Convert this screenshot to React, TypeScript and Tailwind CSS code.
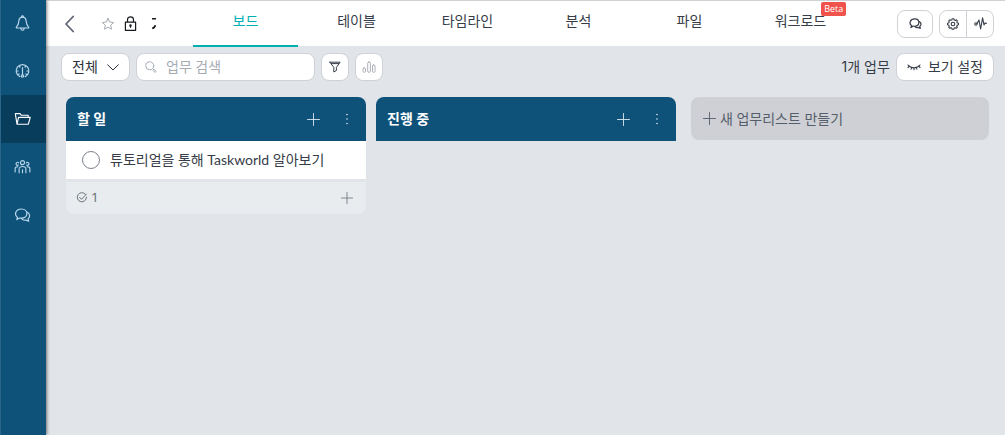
import type { ReactNode } from "react";

type IconProps = { className?: string };

function Svg({ className, box = "0 0 16 16", width = 1, children }: { className?: string; box?: string; width?: number; children: ReactNode }) {
  return (
    <svg viewBox={box} className={className} fill="none" stroke="currentColor" strokeWidth={width} strokeLinecap="round" strokeLinejoin="round" aria-hidden="true">
      {children}
    </svg>
  );
}

const Bell = ({ className }: IconProps) => (
  <Svg className={className} width={1.2}>
    <path d="M8 2.2C5.7 2.2 4.5 4 4.3 6.2C4.1 9 3.5 10.6 1.9 12.1C1.6 12.6 1.8 13 2.3 13H13.7C14.2 13 14.4 12.6 14.1 12.1C12.5 10.6 11.9 9 11.7 6.2C11.5 4 10.3 2.2 8 2.2Z" />
    <path d="M7.2 2.2V1.2C7.2.6 8.8.6 8.8 1.2V2.2M6.4 13.2C6.4 15.9 9.6 15.9 9.6 13.2" />
  </Svg>
);

const Gauge = ({ className }: IconProps) => (
  <Svg className={className} width={1.2}>
    <path d="M5.3 13.6A6.3 6.3 0 1 1 10.7 13.6" />
    <path d="M8 4.6V11.6M5.3 2.5V4.2M10.7 2.5V4.2M1.8 8H3.6M12.4 8H14.2M3.6 11.6L4.6 11M12.4 11.6L11.4 11" />
    <circle cx="8" cy="13" r="1.2" />
  </Svg>
);

const Folder = ({ className }: IconProps) => (
  <Svg className={className} box="0 0 18 16" width={1.2}>
    <path d="M3.2 13.5L1.5 3.2V2.3H6.3L7.7 4H15V6.2M3.2 13.5L4.8 6.3H17.2L15.2 13.5H3.2Z" />
  </Svg>
);

const People = ({ className }: IconProps) => (
  <Svg className={className} box="0 0 18 16" width={1.2}>
    <circle cx="9" cy="3.4" r="2.1" />
    <path d="M4.6 6A1.6 1.6 0 1 1 5 3.6M13.4 6A1.6 1.6 0 1 0 13 3.6" />
    <path d="M5.4 14.2V10.2C5.4 6.6 12.6 6.6 12.6 10.2V14.2M9 11V14.2M1.2 13.2V9.8C1.2 8.4 2.2 7.6 3.9 7.8M16.8 13.2V9.8C16.8 8.4 15.8 7.6 14.1 7.8" />
  </Svg>
);

const Chat = ({ className }: IconProps) => (
  <Svg className={className} width={1.2}>
    <path d="M2.3 12.6L3 10.4C-.8 7.4 1.4 2 6.9 2C14.2 2 14.2 11.2 6.9 11.2C6.2 11.2 5.7 11.1 5.1 11L2.3 12.6Z" />
    <path d="M13 5.3C15.8 7.2 15.6 10.1 13.6 11.7L14.2 14.2L11.4 13.1C9.6 13.5 8 12.9 7.1 11.7" />
  </Svg>
);

const ChatBold = ({ className }: IconProps) => (
  <Svg className={className} width={1.5}>
    <path d="M2.4 13L3.2 10.7C-.6 7.7 1.6 2.4 7.1 2.4C13.8 2.4 13.8 11.4 7.1 11.4C6.4 11.4 5.8 11.3 5.2 11.1L2.4 13Z" />
    <path d="M13 5.8C15.4 7.5 15.2 10.1 13.3 11.5L13.9 14L11.4 12.9C9.6 13.3 8.3 12.8 7.5 12" />
  </Svg>
);

const Star = ({ className }: IconProps) => (
  <Svg className={className} width={1.1}>
    <path d="M8 1.5L9.9 5.7L14.5 6.2L11.1 9.3L12 13.9L8 11.6L4 13.9L4.9 9.3L1.5 6.2L6.1 5.7Z" />
  </Svg>
);

const Lock = ({ className }: IconProps) => (
  <Svg className={className} box="0 0 14 18" width={1.3}>
    <path d="M1.5 7.6H12.5V16.3H1.5ZM3.8 7.5V4.8C3.8.8 10.2.8 10.2 4.8V7.5M7 11.3V13" />
    <circle cx="7" cy="11.2" r=".7" fill="currentColor" />
  </Svg>
);

const Plus = ({ className }: IconProps) => (
  <Svg className={className} box="0 0 13 13" width={0.9}>
    <path d="M6.5 .5V12.5M.5 6.5H12.5" />
  </Svg>
);

const Search = ({ className }: IconProps) => (
  <Svg className={className} box="0 0 12 12">
    <circle cx="4.8" cy="4.8" r="4" />
    <path d="M7.8 7.8L8.9 8.9M8.5 9.2L9.2 8.5L11.2 10.4L10.4 11.2Z" />
  </Svg>
);

const Funnel = ({ className }: IconProps) => (
  <Svg className={className} box="0 0 12 12">
    <path d="M.9 1.2H11.1L7.4 6.4V9.5L4.8 11V6.4L.9 1.2ZM2.3 2.6H9.7" />
  </Svg>
);

const Bars = ({ className }: IconProps) => (
  <Svg className={className} box="0 0 14 12">
    <rect x="1" y="7" width="2.5" height="4.3" rx="1" />
    <rect x="5.7" y="1" width="2.7" height="10.3" rx="1.2" />
    <rect x="10.5" y="4" width="2.5" height="7.3" rx="1" />
  </Svg>
);

const Gear = ({ className }: IconProps) => (
  <Svg className={className} box="0 0 12 12" width={1.1}>
    <circle cx="6" cy="6" r="1.8" />
    <path d="M5.2 .7H6.8L7.2 2L8.2 2.4L9.4 1.8L10.4 2.8L9.8 3.9L10.1 4.8L11.4 5.2V6.8L10.1 7.2L9.7 8.2L10.3 9.3L9.2 10.3L8.1 9.7L7.2 10.1L6.8 11.3H5.2L4.8 10.1L3.8 9.7L2.7 10.3L1.7 9.2L2.2 8.1L1.9 7.2L.6 6.8V5.2L1.9 4.8L2.2 3.9L1.7 2.8L2.8 1.8L3.9 2.3L4.8 2Z" />
  </Svg>
);

const Pulse = ({ className }: IconProps) => (
  <Svg className={className} box="0 0 13 13" width={1.1}>
    <circle cx="1.9" cy="7" r="1.2" />
    <path d="M3.1 6.6L5 3L6.6 12L8.6 .8L10 8L11 6L12.4 6.4" />
  </Svg>
);

const ClosedEye = ({ className }: IconProps) => (
  <Svg className={className} box="0 0 14 7" width={1.1}>
    <path d="M1 1C3.8 4.6 10.2 4.6 13 1M2.2 2.3L1 3.5M4.6 3.6L4.1 5.2M7 4V5.7M9.4 3.6L9.9 5.2M11.8 2.3L13 3.5" />
  </Svg>
);

const Check = ({ className }: IconProps) => (
  <Svg className={className} box="0 0 12 12">
    <path d="M9.2 2A4.6 4.6 0 1 0 10.5 5.2" />
    <path d="M3.6 5.3L5.5 7.3L10.4 2.1" />
  </Svg>
);

const Dots = ({ className }: IconProps) => (
  <svg viewBox="0 0 4 12" className={className} fill="currentColor" aria-hidden="true">
    <circle cx="2" cy="1.5" r=".8" />
    <circle cx="2" cy="6" r=".8" />
    <circle cx="2" cy="10.5" r=".8" />
  </svg>
);

const sideItems = [
  { label: "알림", icon: Bell },
  { label: "대시보드", icon: Gauge },
  { label: "프로젝트", icon: Folder, active: true },
  { label: "사람", icon: People },
  { label: "채팅", icon: Chat },
];

const tabs = [
  { label: "보드", active: true },
  { label: "테이블" },
  { label: "타임라인" },
  { label: "분석" },
  { label: "파일" },
  { label: "워크로드", badge: "Beta" },
];

function Column({ title, children }: { title: string; children?: ReactNode }) {
  return (
    <section className="w-[300px] shrink-0">
      <header className="flex h-11 items-center rounded-t-lg bg-[#0e527a] pl-[11px] pr-[17px] text-white">
        <h2 className="flex-1 font-bold">{title}</h2>
        <button aria-label="업무 추가" className="mr-[25px] text-[#dbe7ef]"><Plus className="size-[13px]" /></button>
        <button aria-label="더 보기" className="text-[#dbe7ef]"><Dots className="h-3 w-1" /></button>
      </header>
      {children}
    </section>
  );
}

export default function App() {
  return (
    <div className="flex min-h-screen bg-[#e1e4e9] font-['Lato','Noto_Sans_CJK_KR',sans-serif] text-sm leading-5 text-[#363c48]">
      <aside className="z-10 w-[46px] shrink-0 border-l border-[#2b658a] bg-[#0e527a] text-[#b9d8eb] shadow-[1px_0_3px_rgba(0,0,0,0.5)]">
        <nav className="-mt-px flex flex-col">
          {sideItems.map(({ label, icon: Icon, active }) => (
            <a key={label} href="#" aria-label={label} className={active ? "flex h-12 items-center justify-center bg-[#093d5c] pr-[2px] text-white" : "flex h-12 items-center justify-center pr-[2px]"}>
              <Icon className="h-4 w-[17px]" />
            </a>
          ))}
        </nav>
      </aside>

      <div className="min-w-0 flex-1">
        <header className="flex h-[46px] items-center border-t border-[#d0d1d3] bg-white pr-[11px]">
          <button aria-label="뒤로" className="ml-[18px] text-[#5d6571]">
            <Svg className="h-[18px] w-[11px]" box="0 0 11 18" width={1.8}><path d="M9.2 1.5L2 9L9.2 16.5" /></Svg>
          </button>
          <button aria-label="즐겨찾기" className="ml-[26px] text-[#a3a8b0]"><Star className="size-[14px]" /></button>
          <Lock className="ml-[9px] h-[17px] w-[13px] text-[#17191d]" />
          <Svg className="ml-[14px] h-3 w-[6px] text-[#17191d]" box="0 0 6 12" width={1.8}><path d="M1 .5H5M4.6 7.4L2.8 9.8L1.2 10.4" strokeLinecap="butt" /></Svg>
          <nav className="ml-9 flex h-[46px] items-stretch gap-[6px] self-start">
            {tabs.map((t) => (
              <a key={t.label} href="#" className={t.active ? "flex w-[105px] justify-center border-b-2 border-[#00b0b0] pt-[10px] text-[#00b0b0]" : "flex w-[105px] justify-center pt-[10px]"}>
                <span className="relative self-start">
                  {t.label}
                  {t.badge && <span className="absolute -right-5 -top-[9px] h-[14px] rounded-[2px] bg-[#f0524c] px-[3px] font-['Open_Sans',sans-serif] text-[9px] leading-[14px] text-white">{t.badge}</span>}
                </span>
              </a>
            ))}
          </nav>
          <div className="ml-auto flex gap-[6px]">
            <button aria-label="채팅" className="flex h-7 w-9 items-center justify-center rounded-lg border border-[#cfd1d6]"><ChatBold className="size-[13px]" /></button>
            <div className="flex h-7 rounded-lg border border-[#cfd1d6]">
              <button aria-label="설정" className="flex w-[27px] items-center justify-center border-r border-[#cfd1d6]"><Gear className="size-3" /></button>
              <button aria-label="활동" className="flex w-[26px] items-center justify-center"><Pulse className="size-[13px]" /></button>
            </div>
          </div>
        </header>

        <div className="flex items-center gap-[6px] pl-[15px] pr-[11px] pt-[7px]">
          <button className="flex h-7 w-[69px] items-center justify-between rounded-lg border border-[#cfd1d6] bg-white px-[10px] text-[#2b303a]">
            전체
            <Svg className="h-[7px] w-3" box="0 0 12 7"><path d="M.7 .8L6 6L11.3 .8" /></Svg>
          </button>
          <label className="flex h-7 w-[179px] items-center gap-[9px] rounded-lg border border-[#cfd1d6] bg-white px-2 text-[#a6abb4]">
            <Search className="size-3 shrink-0" />
            <input aria-label="업무 검색" placeholder="업무 검색" className="h-5 w-full min-w-0 bg-transparent outline-none placeholder:text-[#a6abb4]" />
          </label>
          <button aria-label="필터" className="flex size-7 items-center justify-center rounded-lg border border-[#cfd1d6] bg-white"><Funnel className="size-3" /></button>
          <button aria-label="통계" className="flex size-7 items-center justify-center rounded-lg border border-[#cfd1d6] bg-white text-[#aeb1b8]"><Bars className="h-3 w-[14px]" /></button>
          <span className="ml-auto font-['Inter','Noto_Sans_CJK_KR',sans-serif]">1개 업무</span>
          <button className="flex h-7 items-center gap-[7px] rounded-lg border border-[#cfd1d6] bg-white px-[10px]">
            <ClosedEye className="h-[7px] w-[14px]" />
            보기 설정
          </button>
        </div>

        <main className="flex items-start pl-5 pr-4 pt-4">
          <div className="mr-[10px]">
            <Column title="할 일">
              <label className="flex h-[38px] items-center gap-[10px] bg-white px-4 text-[#363c48]">
                <input type="checkbox" className="size-[18px] appearance-none rounded-full border border-[#7c828d] bg-white" />
                튜토리얼을 통해 Taskworld 알아보기
              </label>
              <footer className="mt-[3px] flex h-8 items-center rounded-b-lg bg-[#e8ecef] pl-[10px] pr-[13px] font-['Inter','Noto_Sans_CJK_KR',sans-serif] text-xs text-[#6b717b]">
                <Check className="mr-1 size-3" />
                <span className="flex-1">1</span>
                <button aria-label="업무 추가"><Plus className="size-3" /></button>
              </footer>
            </Column>
          </div>
          <Column title="진행 중" />
          <button className="ml-[15px] flex h-[43px] min-w-0 flex-1 items-center gap-1 rounded-lg bg-[#cfd0d5] px-3 text-[#555e6b]">
            <Plus className="size-[13px]" />
            새 업무리스트 만들기
          </button>
        </main>
      </div>
    </div>
  );
}
